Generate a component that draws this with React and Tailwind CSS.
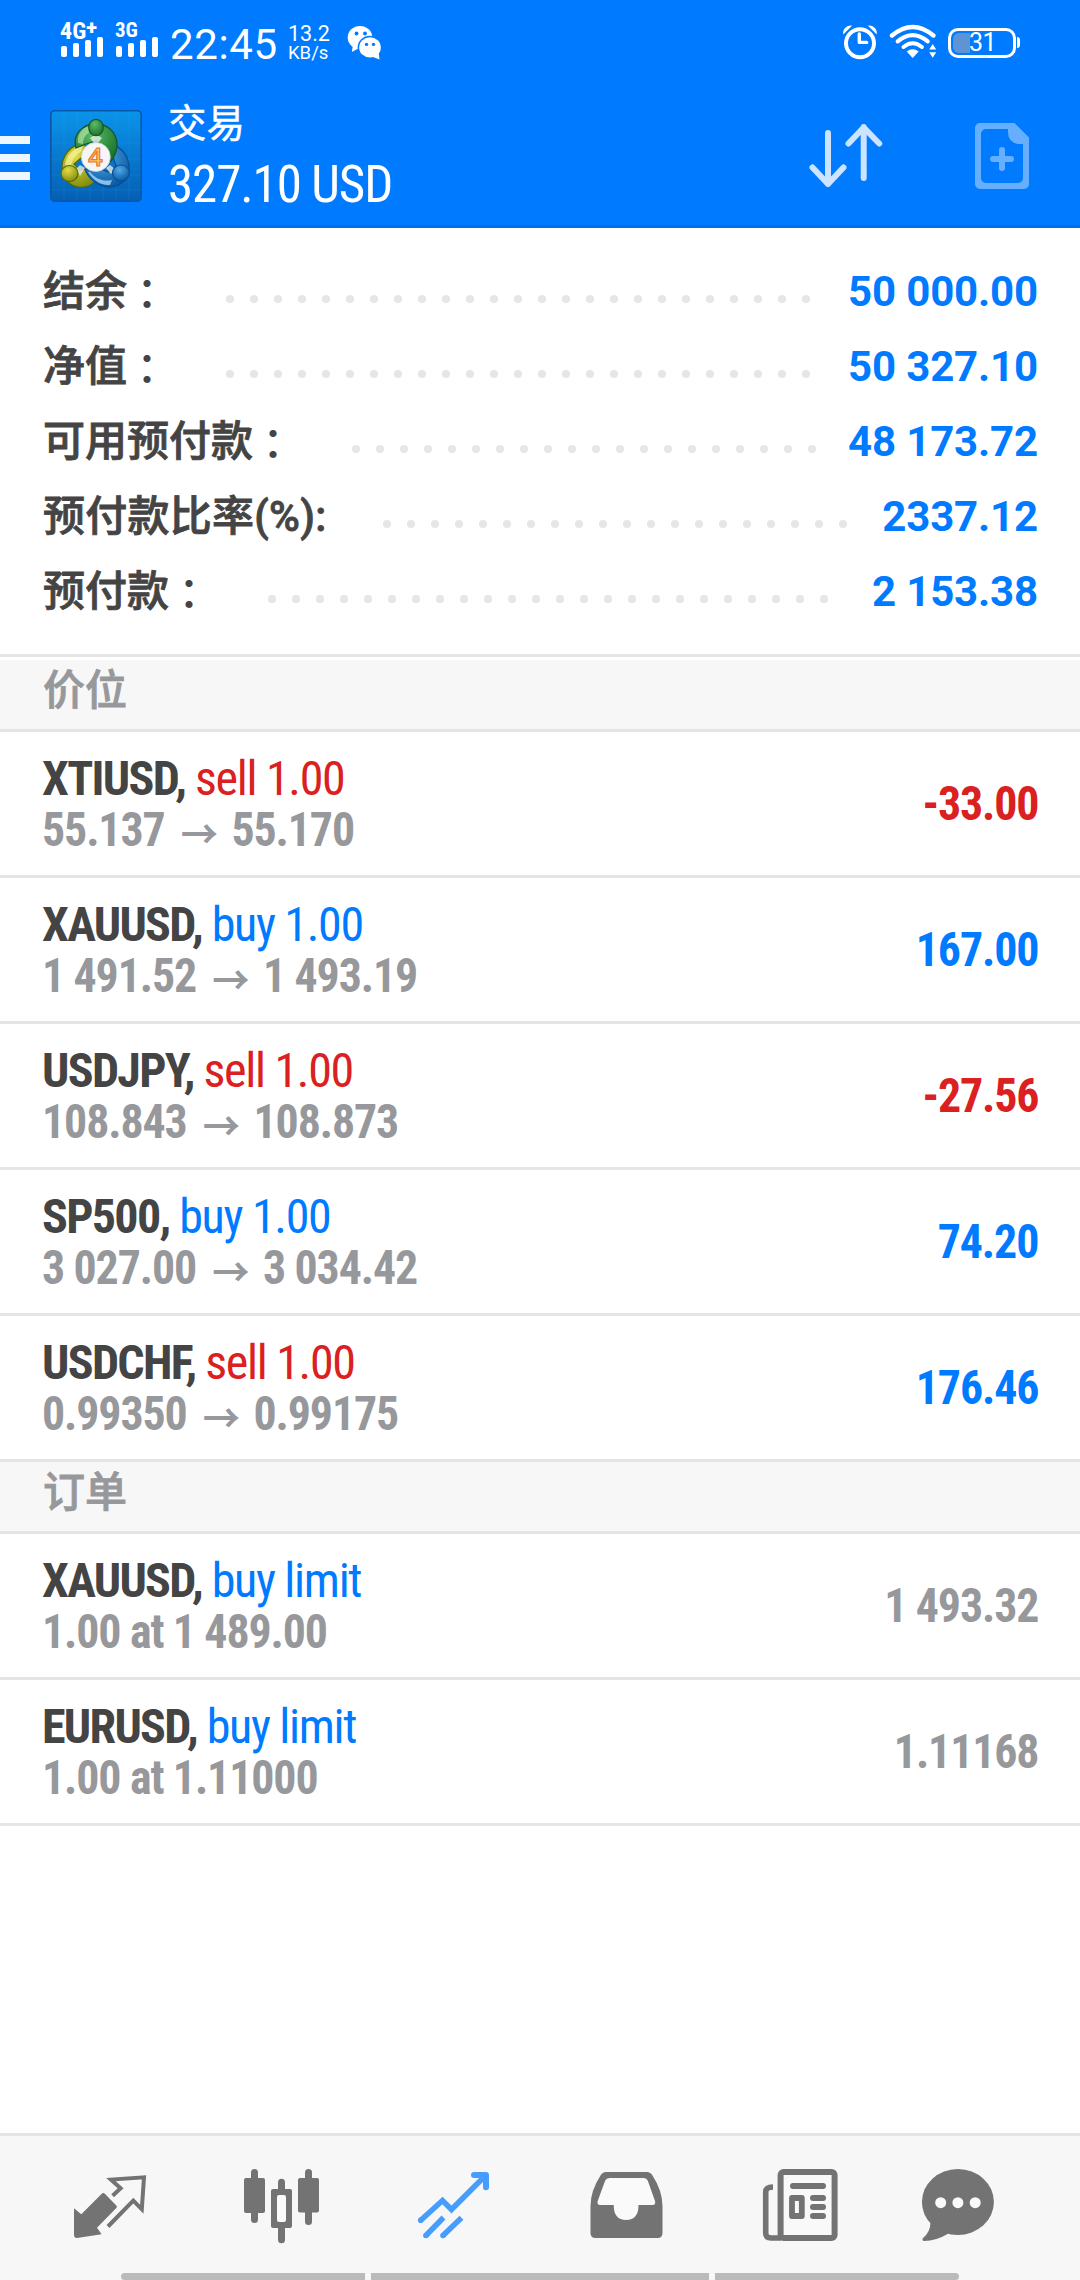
const summary = [
  { label: '结余', wide: true, value: '50 000.00', dots: 25 },
  { label: '净值', wide: true, value: '50 327.10', dots: 25 },
  { label: '可用预付款', wide: true, value: '48 173.72', dots: 20 },
  { label: '预付款比率(%):', wide: false, value: '2337.12', dots: 20 },
  { label: '预付款', wide: true, value: '2 153.38', dots: 24 },
];

const positions = [
  { symbol: 'XTIUSD', side: 'sell', volume: '1.00', open: '55.137', current: '55.170', profit: '-33.00' },
  { symbol: 'XAUUSD', side: 'buy', volume: '1.00', open: '1 491.52', current: '1 493.19', profit: '167.00' },
  { symbol: 'USDJPY', side: 'sell', volume: '1.00', open: '108.843', current: '108.873', profit: '-27.56' },
  { symbol: 'SP500', side: 'buy', volume: '1.00', open: '3 027.00', current: '3 034.42', profit: '74.20' },
  { symbol: 'USDCHF', side: 'sell', volume: '1.00', open: '0.99350', current: '0.99175', profit: '176.46' },
];

const orders = [
  { symbol: 'XAUUSD', type: 'buy limit', detail: '1.00 at 1 489.00', price: '1 493.32' },
  { symbol: 'EURUSD', type: 'buy limit', detail: '1.00 at 1.11000', price: '1.11168' },
];

function Signal({ children }) {
  return (
    <div className="w-[55px]">
      <div className="h-6 whitespace-nowrap font-bold leading-6">{children}</div>
      <div className="-mt-1.5 ml-px flex h-5 items-end gap-1.5">
        <i className="h-[11px] w-1.5 rounded-[2px] bg-white" />
        <i className="h-[14px] w-1.5 rounded-[2px] bg-white" />
        <i className="h-[17px] w-1.5 rounded-[2px] bg-white" />
        <i className="h-5 w-1.5 rounded-[2px] bg-white" />
      </div>
    </div>
  );
}

function WeChat() {
  return (
    <svg viewBox="348 25 36 36" className="ml-[15px] mt-[6px] h-9 w-9" fill="#fff">
      <path d="M354 45l-1.2 7 6.5-3.5z" />
      <ellipse cx="361" cy="37.5" rx="12.3" ry="11.5" />
      <ellipse cx="371" cy="47.4" rx="12.4" ry="11.6" fill="#007aff" />
      <path d="M374 57l6.5 2.4-.8-6.5z" />
      <ellipse cx="371" cy="47.4" rx="10.8" ry="10.2" />
      <g fill="#007aff">
        <circle cx="357.5" cy="33.5" r="1.9" />
        <circle cx="366" cy="33.5" r="1.9" />
        <circle cx="367.5" cy="44.4" r="1.7" />
        <circle cx="374.5" cy="44.4" r="1.7" />
      </g>
    </svg>
  );
}

function StatusBar() {
  return (
    <div className="flex h-[84px] items-start justify-between pt-[19px]">
      <div className="flex items-start pl-[60px]">
        <Signal>
          <span className="font-['Roboto_Condensed'] text-[24px]">4G</span>
          <span className="relative -top-[5px] text-[20px] font-black">+</span>
        </Signal>
        <Signal>
          <span className="relative -top-px font-['Roboto_Condensed'] text-[21px]">3G</span>
        </Signal>
        <div className="w-[118px] pt-[1px] text-[42px] leading-[50px] tracking-[0.6px]">22:45</div>
        <div className="w-[44px] pt-[4px]">
          <div className="text-[21.5px] leading-[21px]">13.2</div>
          <div className="text-[18.5px] leading-[18px]">KB/s</div>
        </div>
        <WeChat />
      </div>
      <div className="flex items-center pr-[60px]">
        <svg viewBox="842 24 37 37" className="mt-[5px] h-[37px] w-[37px]" fill="none" stroke="#fff" strokeLinecap="round">
          <circle cx="860" cy="43.3" r="14" strokeWidth="4" />
          <path d="M859.3 34v8.4h7.4" strokeWidth="3.4" strokeLinejoin="round" />
          <path d="M843.3 34.5c-1-5 3.5-9.800 8.700-8.800zM876.700 34.500c1-5-3.500-9.800-8.700-8.800z" fill="#fff" stroke="none" />
        </svg>
        <svg viewBox="888 24 50 37" className="ml-[9px] mt-[5px] h-[37px] w-[50px]" fill="none" stroke="#fff" strokeLinecap="round">
          <path d="M892 35.500Q912.700 18.500 933.400 35.500" strokeWidth="4.400" />
          <path d="M897.700 41.300Q912.700 29 927.700 41.300" strokeWidth="4.200" />
          <path d="M903.500 47Q912.700 39.500 921.900 47" strokeWidth="4" />
          <path d="M906.700 51.500Q912.700 47 918.700 51.500L912.700 58z" fill="#fff" stroke="none" />
          <path d="M932.700 44l3.500 5.500h-7zM932.700 57.800l3.500-5.500h-7z" fill="#fff" stroke="none" />
        </svg>
        <div className="ml-[10px] mt-[5px] flex items-center">
          <div className="relative h-[30px] w-[68px] rounded-[10px] border-[3px] border-white">
            <div className="absolute left-[2px] top-[2px] h-5 w-[17px] rounded-l-[6px] bg-[#5c94d6]" />
            <div className="absolute left-[18px] top-0 text-[25px] leading-[24px] tracking-[-0.5px]">31</div>
          </div>
          <div className="ml-px h-[11px] w-[3px] rounded-r-[3px] bg-white" />
        </div>
      </div>
    </div>
  );
}

function Logo() {
  return (
    <svg viewBox="0 0 92 92" className="ml-[20px] mt-[26px] h-[92px] w-[92px]">
      <defs>
        <linearGradient id="tile" x1="0" y1="0" x2="0" y2="1">
          <stop offset="0" stopColor="#0a94ea" />
          <stop offset="1" stopColor="#055fb4" />
        </linearGradient>
        <radialGradient id="green" cx=".4" cy=".3" r=".7">
          <stop offset="0" stopColor="#5dbb62" />
          <stop offset="1" stopColor="#1b7530" />
        </radialGradient>
        <radialGradient id="yellow" cx=".4" cy=".3" r=".7">
          <stop offset="0" stopColor="#e2dc48" />
          <stop offset="1" stopColor="#87900f" />
        </radialGradient>
        <radialGradient id="blue" cx=".4" cy=".3" r=".7">
          <stop offset="0" stopColor="#4fabe6" />
          <stop offset="1" stopColor="#0b5aa6" />
        </radialGradient>
      </defs>
      <rect x=".8" y=".8" width="90.400" height="90.400" rx="4" fill="url(#tile)" stroke="#0a56a6" strokeWidth="1.600" />
      <path d="M14 1v90M27 1v90M40 1v90M53 1v90M66 1v90M79 1v90M1 17h90M1 33h90M1 49h90M1 65h90M1 80h90" stroke="#38aef5" strokeOpacity=".15" />
      {/* yellow figure */}
      <path d="M34 33C20 35 11 46 12 60C14 72 24 79 35 77C41 76 45 72 46 68L40 58L30 60L24 54L38 42Z" fill="url(#yellow)" stroke="#4e6b14" strokeWidth="1.300" />
      <path d="M15 55C16 46 23 38 33 36L31 42C25 45 22 50 21 56Z" fill="#f8f6a4" fillOpacity=".7" />
      {/* blue figure */}
      <path d="M60 34C73 37 80 48 79 61C77 71 69 77 59 77C47 76 38 68 35 59L48 58L58 62L66 56L62 44Z" fill="url(#blue)" stroke="#0a4f93" strokeWidth="1.300" />
      <path d="M40 62C46 69 53 72 62 70L60 75C51 76 43 70 38 62Z" fill="#bfe6ff" fillOpacity=".7" />
      {/* green figure */}
      <path d="M26 38C22 25 32 14 46 14C59 14 68 24 67 37C66 43 64 48 60 52L56 38L46 31L36 34Z" fill="url(#green)" stroke="#14572a" strokeWidth="1.300" />
      <path d="M28 33C27 24 32 18 39 16L40 22C36 24 33 28 33 34Z" fill="#c4f0b4" fillOpacity=".6" />
      <path d="M40 28l3-2h6l3 2-4 5h-4zM26 59l4-4 5 3-5 8zM65 59l-5-4-4 3 5 6z" fill="#e6eee8" fillOpacity=".8" />
      <ellipse cx="46" cy="17.500" rx="7.300" ry="8.200" fill="url(#green)" stroke="#14572a" strokeWidth="1.200" />
      <ellipse cx="19.500" cy="63.500" rx="8.500" ry="8" fill="url(#yellow)" stroke="#4e6b14" strokeWidth="1.200" />
      <ellipse cx="71" cy="63" rx="8.500" ry="8" fill="url(#blue)" stroke="#0a4f93" strokeWidth="1.200" />
      <circle cx="45.800" cy="47" r="14.500" fill="#f6f6f8" stroke="#c9ccd2" strokeWidth=".8" />
      <text x="45.500" y="56" textAnchor="middle" fontFamily="Open Sans, sans-serif" fontSize="25" fontWeight="600" fill="#ffc766" stroke="#e8782a" strokeWidth="1.200">4</text>
    </svg>
  );
}

function Header() {
  return (
    <div className="flex h-[144px] items-start border-b-[3px] border-[#006fe6]">
      <div className="flex w-[30px] flex-col gap-[10px] pt-[52px]">
        <i className="h-2 bg-[#eef6ff]" />
        <i className="h-2 bg-[#eef6ff]" />
        <i className="h-2 bg-[#eef6ff]" />
      </div>
      <Logo />
      <div className="ml-[26px] flex-1 pt-[17px]">
        <div className="text-[38.5px] leading-[46px] [-webkit-text-stroke:0.4px]">交易</div>
        <div className="mt-[8px] font-['Roboto_Condensed'] text-[51px] leading-[60px] tracking-[-1.1px]">327.10 USD</div>
      </div>
      <svg viewBox="805 120 82 72" className="mt-9 h-[72px] w-[82px]" fill="none" stroke="#cce4ff" strokeWidth="6" strokeLinecap="round" strokeLinejoin="round">
        <path d="M828 133v51M812.500 167.500L828 184l15.500-16.500M863.700 178v-51M848.500 143.500L863.700 127.500l15.500 16" />
      </svg>
      <svg viewBox="972 120 60 72" className="ml-[85px] mr-12 mt-9 h-[72px] w-[60px]" fill="#66afff">
        <path fillRule="evenodd" d="M980 123h34.500l14.500 14.500V184a5 5 0 0 1-5 5h-44a5 5 0 0 1-5-5v-56a5 5 0 0 1 5-5zM986 129a5 5 0 0 0-5 5v44a5 5 0 0 0 5 5h32a5 5 0 0 0 5-5v-34h-5q-10-2-10-12v-3z" />
        <path d="M1002 150v18M993 159h18" stroke="#66afff" strokeWidth="6" strokeLinecap="round" />
      </svg>
    </div>
  );
}

function SummaryRow({ label, wide, value, dots }) {
  return (
    <div className="flex h-[75px] items-center text-[42px] leading-[75px]">
      <div className="flex font-medium text-[#444] [-webkit-text-stroke:0.8px]">
        {wide ? label : <span className="tracking-[0.25px]">{label}</span>}
        {wide && <span className="-translate-x-px font-['Noto_Sans_CJK_TC'] [-webkit-text-stroke:0]">：</span>}
      </div>
      <div className="ml-[57px] mt-[14px] flex gap-4">
        {Array.from({ length: dots }, (_, i) => (
          <i key={i} className="h-2 w-2 rounded-full bg-[#e6e6e6]" />
        ))}
      </div>
      <div className="ml-auto font-bold tracking-[-0.15px] text-[#007aff]">{value}</div>
    </div>
  );
}

function SectionTitle({ children }) {
  return (
    <div className="h-[72px] border-b-[3px] border-[#e5e5e5] bg-[#f7f7f7] pl-[43px] text-[42px] font-medium leading-[62px] text-[#97989c] [-webkit-text-stroke:0.8px]">
      {children}
    </div>
  );
}

function Row({ symbol, action, color, detail, value, valueColor }) {
  return (
    <div className="flex h-[146px] items-center justify-between border-b-[3px] border-[#e5e5e5] pl-[42px] pr-[42px] font-['Roboto_Condensed','Noto_Sans_CJK_SC'] text-[48px] leading-[51px]">
      <div className="whitespace-nowrap">
        <div className="h-[51px] tracking-[-1.3px]">
          <span className="font-bold tracking-[-1.7px] text-[#444]">{symbol},</span> <span className={color}>{action}</span>
        </div>
        <div className="h-[51px] origin-left scale-x-[0.955] font-bold tracking-[-1.15px] text-[#97989c]">{detail}</div>
      </div>
      <div className={`origin-right scale-x-[0.955] font-bold tracking-[-1.15px] ${valueColor}`}>{value}</div>
    </div>
  );
}

const navIcons = [
  <g>
    <path d="M74 2208.300l7.300 6L101.500 2194q1.800-1.800 3.600 0l11.200 11.500q1.300 1.300 0 2.600L97 2227.700l4.600 6.600L77 2238q-3 0-3-3z" />
    <path d="M108 2226.500L133.300 2200.700l8.500 8.600L144 2177.300l-33 2.300 9.600 8.600-8 7.500" fill="none" stroke="#737373" strokeWidth="4" />
  </g>,
  <g>
    <rect x="244" y="2178" width="21" height="35" rx="2" />
    <rect x="251" y="2169" width="7" height="54" rx="3.500" />
    <rect x="298" y="2178" width="21" height="34.500" rx="2" />
    <rect x="305" y="2169" width="7" height="56" rx="3.500" />
    <rect x="278" y="2178.700" width="7" height="64.500" rx="3.500" />
    <rect x="271" y="2189" width="21" height="39" rx="2" />
    <rect x="277" y="2195" width="9" height="27" rx="2" fill="#fafafa" />
  </g>,
  <g fill="none" stroke="#449dff" strokeWidth="5.500">
    <path d="M420.500 2220.500L442.500 2200.500l9 9L485 2176" />
    <path d="M474 2175h12v12.300" strokeWidth="6" strokeLinecap="round" strokeLinejoin="round" />
    <path d="M425.900 2235.500L443.500 2217.500M443 2235.500L461.500 2217.700" />
    <g fill="#449dff" stroke="none">
      <circle cx="420.700" cy="2220.300" r="2.800" />
      <circle cx="425.900" cy="2235.500" r="2.800" />
      <circle cx="443" cy="2235.500" r="2.800" />
    </g>
  </g>,
  <g>
    <path d="M606 2172h41q3.500 0 5.500 3.500Q662.500 2191 662.500 2206v27q0 5-5 5h-62q-5 0-5-5v-27q0-15 10-30.500q2-3.500 5.500-3.500z" />
    <path d="M609.500 2178h34.500q2.500 0 3.700 2.500l7.300 20.500q1 4-2.500 4h-14q0 15-12.400 15t-12.400-15h-13.500q-3.500 0-2.500-4l7.500-20.500q1.200-2.500 4.300-2.500z" fill="#fafafa" />
  </g>,
  <g>
    <rect x="780.600" y="2172" width="54" height="66" rx="3" fill="#f9f9f9" stroke="#737373" strokeWidth="6" />
    <path d="M773 2187q-7.300 0-7.300 5v41q0 5 5.500 5h10" fill="none" stroke="#737373" strokeWidth="5.600" />
    <rect x="790" y="2183" width="36" height="6" rx="3" />
    <rect x="792" y="2198" width="9.800" height="18" fill="none" stroke="#737373" strokeWidth="5.800" strokeLinejoin="round" />
    <rect x="810" y="2195" width="16" height="6" rx="3" />
    <rect x="810" y="2204" width="16" height="6" rx="3" />
    <rect x="810" y="2213" width="16" height="6" rx="3" />
  </g>,
  <g>
    <ellipse cx="957.900" cy="2202" rx="36" ry="33" />
    <path d="M930.500 2222q0 10-7.500 16q-1.500 2.500 1 3q12 0 24.500-7.500z" />
    <circle cx="940.700" cy="2202.700" r="5.500" fill="#fafafa" />
    <circle cx="957.900" cy="2202.700" r="5.500" fill="#fafafa" />
    <circle cx="975.200" cy="2202.700" r="5.500" fill="#fafafa" />
  </g>,
];

function BottomNav() {
  return (
    <div className="relative flex h-[147px] border-t-[3px] border-[#e5e5e5] bg-[#f7f7f7] px-6">
      {navIcons.map((icon, i) => (
        <svg key={i} viewBox={`${24 + i * 172} 2136 172 144`} className="h-[144px] w-[172px]" fill="#737373">
          {icon}
        </svg>
      ))}
      {/* gesture hints of the system bar */}
      <div className="absolute inset-x-[121px] bottom-0 flex h-[7px] gap-1.5">
        <i className="w-[244px] rounded-l-full bg-[#bababa]" />
        <i className="flex-1 bg-[#bababa]" />
        <i className="w-[244px] rounded-r-full bg-[#bababa]" />
      </div>
    </div>
  );
}

export default function App() {
  return (
    <div className="flex h-[2280px] w-[1080px] flex-col overflow-hidden bg-white font-['Roboto','Noto_Sans_CJK_SC',sans-serif]">
      <div className="bg-[#007aff] text-white">
        <StatusBar />
        <Header />
      </div>

      <div className="h-[429px] border-b-[3px] border-[#e5e5e5] pl-[43px] pr-[42px] pt-[26px]">
        {summary.map((s) => <SummaryRow key={s.label} {...s} />)}
      </div>

      <div className="pt-[3px]">
        <SectionTitle>价位</SectionTitle>
        {positions.map((p) => (
          <Row
            key={p.symbol}
            symbol={p.symbol}
            action={`${p.side} ${p.volume}`}
            color={p.side === 'sell' ? 'text-[#da2020]' : 'text-[#007aff]'}
            detail={<>{p.open}<span className="ml-[17px] mr-[14px] inline-block h-[51px] align-top font-['Noto_Sans_CJK_SC'] text-[39px] leading-[54px] tracking-normal">→</span>{p.current}</>}
            value={p.profit}
            valueColor={p.profit.startsWith('-') ? 'text-[#da2020]' : 'text-[#007aff]'}
          />
        ))}
      </div>

      <SectionTitle>订单</SectionTitle>
      {orders.map((o) => (
        <Row key={o.symbol} symbol={o.symbol} action={o.type} color="text-[#007aff]" detail={o.detail} value={o.price} valueColor="text-[#97989c]" />
      ))}

      <div className="flex-1" />
      <BottomNav />
    </div>
  );
}
